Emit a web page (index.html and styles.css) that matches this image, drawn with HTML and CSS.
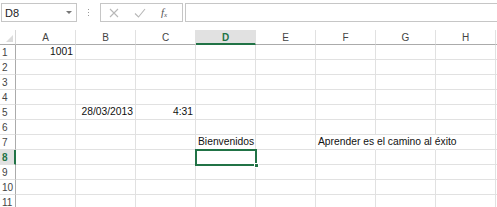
FILE: index.html
```html
<!DOCTYPE html>
<html>
<head>
<meta charset="utf-8">
<link rel="stylesheet" href="styles.css">
</head>
<body>
<div class="fbar">
  <div class="namebox"><span class="nb-text">D8</span><span class="nb-arrow"></span></div>
  <div class="dots"><i></i><i></i><i></i></div>
  <div class="btns">
    <svg class="ico" width="10" height="10" viewBox="0 0 10 10"><path d="M1 1L9 9M9 1L1 9" stroke="#b8b8b8" stroke-width="1.1" fill="none"/></svg>
    <svg class="ico" width="12" height="10" viewBox="0 0 12 10"><path d="M1 5.5L4.5 9L11 1" stroke="#b8b8b8" stroke-width="1.1" fill="none"/></svg>
    <span class="fx">f<sub>x</sub></span>
  </div>
  <div class="finput"></div>
</div>
<div class="sheet">
  <div class="grid">
    <div class="corner"><span class="tri"></span></div>
    <div class="ch">A</div><div class="ch">B</div><div class="ch">C</div><div class="ch sel">D</div><div class="ch">E</div><div class="ch">F</div><div class="ch">G</div><div class="ch">H</div><div class="ch end"></div>

    <div class="rh">1</div><div class="c r">1001</div><div class="c"></div><div class="c"></div><div class="c"></div><div class="c"></div><div class="c"></div><div class="c"></div><div class="c"></div><div class="c end"></div>
    <div class="rh">2</div><div class="c"></div><div class="c"></div><div class="c"></div><div class="c"></div><div class="c"></div><div class="c"></div><div class="c"></div><div class="c"></div><div class="c end"></div>
    <div class="rh">3</div><div class="c"></div><div class="c"></div><div class="c"></div><div class="c"></div><div class="c"></div><div class="c"></div><div class="c"></div><div class="c"></div><div class="c end"></div>
    <div class="rh">4</div><div class="c"></div><div class="c"></div><div class="c"></div><div class="c"></div><div class="c"></div><div class="c"></div><div class="c"></div><div class="c"></div><div class="c end"></div>
    <div class="rh">5</div><div class="c"></div><div class="c r">28/03/2013</div><div class="c r">4:31</div><div class="c"></div><div class="c"></div><div class="c"></div><div class="c"></div><div class="c"></div><div class="c end"></div>
    <div class="rh">6</div><div class="c"></div><div class="c"></div><div class="c"></div><div class="c"></div><div class="c"></div><div class="c"></div><div class="c"></div><div class="c"></div><div class="c end"></div>
    <div class="rh">7</div><div class="c"></div><div class="c"></div><div class="c"></div><div class="c txt">Bienvenidos</div><div class="c"></div><div class="c ov">Aprender es el camino al éxito</div><div class="c nol"></div><div class="c"></div><div class="c end"></div>
    <div class="rh sel">8</div><div class="c"></div><div class="c"></div><div class="c"></div><div class="c active"><span class="handle"></span></div><div class="c"></div><div class="c"></div><div class="c"></div><div class="c"></div><div class="c end"></div>
    <div class="rh">9</div><div class="c"></div><div class="c"></div><div class="c"></div><div class="c"></div><div class="c"></div><div class="c"></div><div class="c"></div><div class="c"></div><div class="c end"></div>
    <div class="rh">10</div><div class="c"></div><div class="c"></div><div class="c"></div><div class="c"></div><div class="c"></div><div class="c"></div><div class="c"></div><div class="c"></div><div class="c end"></div>
    <div class="rh">11</div><div class="c"></div><div class="c"></div><div class="c"></div><div class="c"></div><div class="c"></div><div class="c"></div><div class="c"></div><div class="c"></div><div class="c end"></div>
  </div>
</div>
</body>
</html>
```
FILE: styles.css
```css
* { box-sizing: border-box; }
html, body { margin: 0; padding: 0; background: #fff; overflow: hidden; }
body { width: 497px; height: 207px; font-family: "Liberation Sans", Arial, sans-serif; }

.fbar { height: 30px; display: flex; align-items: flex-start; padding-top: 3px; }
.namebox { margin-left: 1px; width: 76px; height: 19px; border: 1px solid #c6c6c6; display: flex; align-items: center; justify-content: space-between; padding: 0 4px 0 3px; }
.nb-text { font-size: 11px; color: #222; }
.nb-arrow { width: 0; height: 0; border-left: 3px solid transparent; border-right: 3px solid transparent; border-top: 3px solid #777; }
.dots { width: 23px; height: 19px; display: flex; flex-direction: column; align-items: center; justify-content: center; gap: 2px; }
.dots i { display: block; width: 1px; height: 1px; background: #9a9a9a; }
.btns { width: 83px; height: 19px; border: 1px solid #c6c6c6; display: flex; align-items: center; padding-left: 8px; gap: 15px; }
.fx { font-family: "Liberation Serif", serif; font-style: italic; font-size: 11px; color: #555; }
.fx sub { font-size: 7px; vertical-align: -1px; }
.finput { margin-left: 2px; flex: 1; height: 19px; border: 1px solid #c6c6c6; border-right: none; }

.grid { display: grid; grid-template-columns: 16px repeat(8, 60px) 1fr; grid-auto-rows: 15px; }
.grid > div { border-right: 1px solid #e1e1e1; border-bottom: 1px solid #e1e1e1; font-size: 10.3px; line-height: 14px; color: #111; position: relative; white-space: nowrap; }
.grid > .corner { border-right: 1px solid #d6d6d6; border-bottom: 1px solid #ababab; }
.tri { position: absolute; right: 2px; bottom: 2px; width: 0; height: 0; border-left: 7px solid transparent; border-bottom: 7px solid #dcdcdc; }
.grid > .ch { text-align: center; color: #444; border-bottom: 1px solid #ababab; font-size: 10px; line-height: 15px; }
.grid > .ch.sel { background: #e1e1e1; color: #217346; font-weight: bold; border-bottom: 2px solid #217346; }
.grid > .rh { color: #444; font-size: 10px; padding-left: 2px; line-height: 15px; border-right: 1px solid #ababab; }
.grid > .rh.sel { background: #e1e1e1; color: #217346; font-weight: bold; border-right: 2px solid #217346; }
.grid > .end { border-right: none; }
.grid > .c.r { text-align: right; padding-right: 2px; }
.grid > .c.txt { padding-left: 2px; }
.grid > .c.ov { overflow: visible; padding-left: 2px; z-index: 1; border-right-color: transparent; }
.grid > .c.nol { border-right-color: transparent; }
.grid > .c.active { outline: 2px solid #217346; outline-offset: -1px; z-index: 2; }
.handle { position: absolute; right: -4px; bottom: -4px; width: 5px; height: 5px; background: #217346; border: 1px solid #fff; }
```
